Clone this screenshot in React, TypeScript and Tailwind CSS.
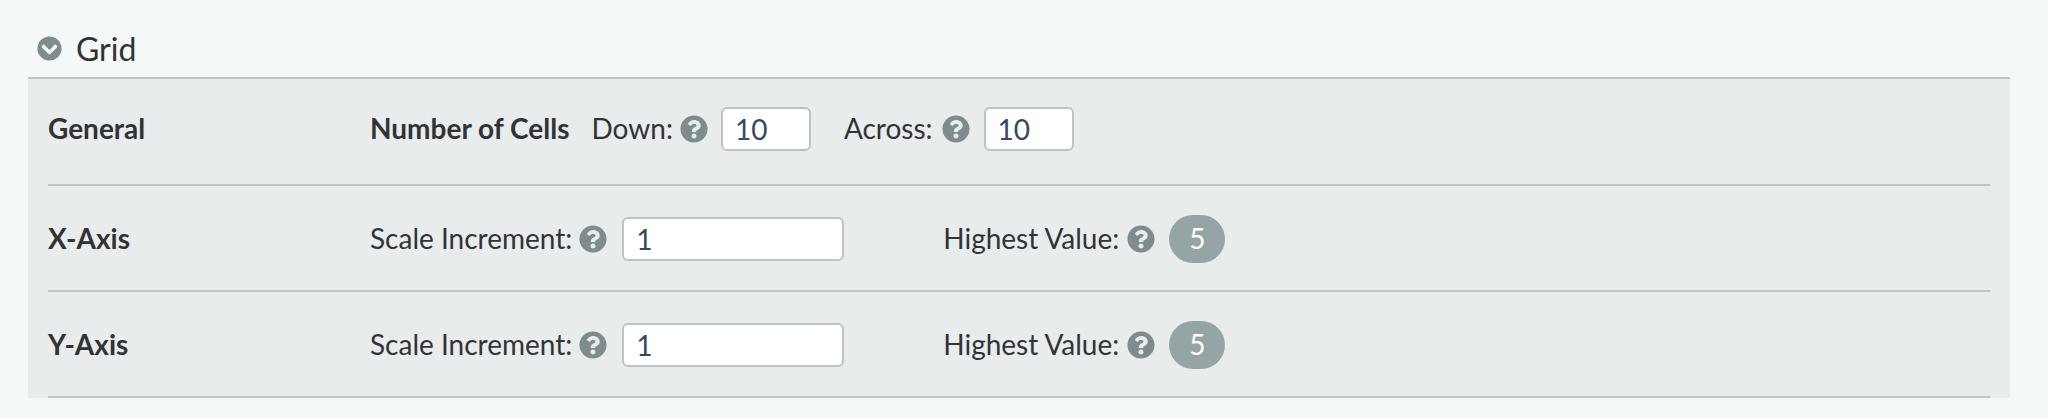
import { FaChevronCircleDown, FaQuestionCircle } from "react-icons/fa";

const Help = ({ className }: { className: string }) => (
  <FaQuestionCircle className={`shrink-0 text-[28px] text-[#7f8c8d] ${className}`} />
);

const Input = ({ value, wide, className }: { value: string; wide?: boolean; className: string }) => (
  <input
    readOnly
    value={value}
    className={`h-[44px] rounded-[6px] border-2 border-[#bdc3c7] bg-white px-[12px] text-[28px] text-[#34495e] outline-none ${wide ? "w-[222px]" : "w-[90px]"} ${className}`}
  />
);

const Badge = () => (
  <span className="ml-[14px] flex h-[48px] w-[56px] items-center justify-center rounded-full bg-[#95a5a6] pb-[1px] text-[28px] text-white">5</span>
);

const AxisRow = ({ label }: { label: string }) => (
  <div className="flex h-[106px] items-center border-b-2 border-[#bdc3c7] pt-[1px]">
    <div className="w-[322px] shrink-0 pb-[2px] font-bold">{label}</div>
    <span className="pb-[2px]">Scale Increment:</span>
    <Help className="ml-[7px]" />
    <Input value="1" wide className="ml-[15px]" />
    <span className="ml-[99px] pb-[2px]">Highest Value:</span>
    <Help className="ml-[8px]" />
    <Badge />
  </div>
);

export default function App() {
  return (
    <div className="h-[418px] bg-[#f4f8f9] pl-[28px] pr-[38px] font-['Lato',sans-serif] text-[28px] text-[#333333]">
      <div className="flex h-[77px] items-center gap-[14px] pl-[9px] pt-[20px]">
        <FaChevronCircleDown className="text-[25px] text-[#7f8c8d]" />
        <span className="text-[32px]">Grid</span>
      </div>
      <div className="border-t-2 border-[#bdc3c7] bg-[#e8eced] pl-[20px] pr-[20px]">
        <div className="flex h-[107px] items-center border-b-2 border-[#bdc3c7] pb-[5px]">
          <div className="w-[322px] shrink-0 pb-[2px] font-bold">General</div>
          <span className="pb-[2px] font-bold">Number of Cells</span>
          <span className="ml-[22px] pb-[2px]">Down:</span>
          <Help className="ml-[7px]" />
          <Input value="10" className="ml-[13px]" />
          <span className="ml-[33px] pb-[2px]">Across:</span>
          <Help className="ml-[9px]" />
          <Input value="10" className="ml-[14px]" />
        </div>
        <AxisRow label="X-Axis" />
        <AxisRow label="Y-Axis" />
      </div>
    </div>
  );
}
